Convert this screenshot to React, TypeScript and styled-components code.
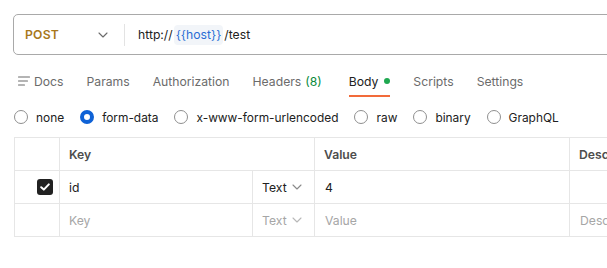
import React from "react";
import styled, { createGlobalStyle } from "styled-components";

const GlobalStyle = createGlobalStyle`
  html, body {
    margin: 0;
    background: #ffffff;
    overflow: hidden;
  }
  body {
    font-family: Inter, "Noto Sans", sans-serif;
    font-size: 12.2px;
    color: #212121;
  }
`;

const tabs = [
  { label: "Params" },
  { label: "Authorization" },
  { label: "Headers", count: "(8)" },
  { label: "Body", active: true, dot: true },
  { label: "Scripts" },
  { label: "Settings" },
];

const bodyTypes = ["none", "form-data", "x-www-form-urlencoded", "raw", "binary", "GraphQL"];

const Chevron = () => (
  <svg width="10" height="6" viewBox="0 0 10 6" fill="none">
    <path d="M1 1l4 4 4-4" stroke="#6b6b6b" strokeWidth="1.1" strokeLinecap="round" strokeLinejoin="round" />
  </svg>
);

const DocsIcon = () => (
  <svg width="12" height="10" viewBox="0 0 12 10" fill="none">
    <path d="M0.5 1h11M0.5 5h9M0.5 9h6" stroke="#6b6b6b" strokeWidth="1.1" strokeLinecap="round" />
  </svg>
);

const CheckMark = () => (
  <svg width="10" height="8" viewBox="0 0 10 8" fill="none">
    <path d="M1.2 4.2l2.6 2.4L8.8 1.4" stroke="#ffffff" strokeWidth="2" strokeLinecap="round" strokeLinejoin="round" />
  </svg>
);

export default function App() {
  return (
    <>
      <GlobalStyle />
      <Page>
        <UrlBar>
          <MethodSelect>
            <Method>POST</Method>
            <Chevron />
          </MethodSelect>
          <Divider />
          <UrlText>
            http://
            <VarChip>{"{{host}}"}</VarChip>
            /test
          </UrlText>
        </UrlBar>

        <TabRow>
          <Tab>
            <DocsIcon />
            Docs
          </Tab>
          {tabs.map((t) => (
            <Tab key={t.label} $active={t.active}>
              {t.label}
              {t.count && <Count>{t.count}</Count>}
              {t.dot && <Dot />}
            </Tab>
          ))}
        </TabRow>

        <RadioRow>
          {bodyTypes.map((b) => (
            <RadioItem key={b}>
              <Radio $checked={b === "form-data"} />
              {b}
            </RadioItem>
          ))}
        </RadioRow>

        <Table>
          <Row>
            <CheckCell />
            <HeadCell $width={255}>Key</HeadCell>
            <HeadCell $width={255}>Value</HeadCell>
            <HeadCell $width={120}>Desc</HeadCell>
          </Row>
          <Row>
            <CheckCell>
              <CheckBox>
                <CheckMark />
              </CheckBox>
            </CheckCell>
            <KeyCell>
              <CellText>id</CellText>
              <TypeSelect>
                Text
                <Chevron />
              </TypeSelect>
            </KeyCell>
            <Cell $width={255}>4</Cell>
            <Cell $width={120} />
          </Row>
          <Row>
            <CheckCell />
            <KeyCell>
              <CellText $placeholder>Key</CellText>
              <TypeSelect $placeholder>
                Text
                <Chevron />
              </TypeSelect>
            </KeyCell>
            <Cell $width={255} $placeholder>Value</Cell>
            <Cell $width={120} $placeholder>Desc</Cell>
          </Row>
        </Table>
      </Page>
    </>
  );
}

const Page = styled.div`
  width: 720px;
  padding: 14px 0 0 13px;
`;

const UrlBar = styled.div`
  display: flex;
  align-items: center;
  height: 41px;
  box-sizing: border-box;
  border: 1px solid #a9a9a9;
  border-radius: 5px;
`;

const MethodSelect = styled.div`
  display: flex;
  align-items: center;
  justify-content: space-between;
  width: 110px;
  box-sizing: border-box;
  padding: 0 16px 0 11px;
`;

const Method = styled.span`
  color: #a8781c;
  font-weight: 600;
  letter-spacing: 0.2px;
`;

const Divider = styled.div`
  width: 1px;
  height: 22px;
  background: #e3e3e3;
`;

const UrlText = styled.div`
  display: flex;
  align-items: center;
  gap: 1px;
  padding-left: 13px;
  color: #212121;
`;

const VarChip = styled.span`
  display: inline-flex;
  align-items: center;
  height: 20px;
  padding: 0 2px;
  border-radius: 4px;
  background: #f2f5f9;
  color: #2a6ed5;
`;

const TabRow = styled.div`
  display: flex;
  gap: 23px;
  margin-top: 11px;
  padding-left: 5px;
`;

const Tab = styled.div<{ $active?: boolean }>`
  display: flex;
  align-items: center;
  gap: 5px;
  height: 31px;
  box-sizing: border-box;
  padding-top: 1px;
  border-bottom: 2px solid ${(p) => (p.$active ? "#f26b3a" : "transparent")};
  color: ${(p) => (p.$active ? "#212121" : "#6b6b6b")};
  svg {
    margin-right: -1px;
  }
`;

const Count = styled.span`
  color: #0a8a3c;
  margin: 0 4px 0 -1px;
`;

const Dot = styled.span`
  width: 6px;
  height: 6px;
  border-radius: 50%;
  background: #1fa850;
  margin-left: 1px;
`;

const RadioRow = styled.div`
  display: flex;
  align-items: center;
  gap: 16px;
  height: 22px;
  margin-top: 9px;
  padding-left: 1px;
  font-size: 11.9px;
`;

const RadioItem = styled.label`
  display: flex;
  align-items: center;
  gap: 8px;
  color: #212121;
`;

const Radio = styled.span<{ $checked?: boolean }>`
  width: 14px;
  height: 14px;
  box-sizing: border-box;
  border-radius: 50%;
  border: ${(p) => (p.$checked ? "4px solid #0f62d6" : "1px solid #8f8f8f")};
  background: #ffffff;
`;

const Table = styled.div`
  margin-top: 9px;
  margin-left: 1px;
  border-top: 1px solid #e6e6e6;
  border-left: 1px solid #e6e6e6;
`;

const Row = styled.div`
  display: flex;
  height: 33px;
  box-sizing: border-box;
  border-bottom: 1px solid #e6e6e6;
`;

const CheckCell = styled.div`
  display: flex;
  align-items: center;
  justify-content: flex-end;
  width: 45px;
  padding-right: 6px;
  box-sizing: border-box;
  border-right: 1px solid #e6e6e6;
`;

const HeadCell = styled.div<{ $width: number }>`
  display: flex;
  align-items: center;
  width: ${(p) => p.$width}px;
  box-sizing: border-box;
  padding-left: 9px;
  border-right: 1px solid #e6e6e6;
  color: #4d4d4d;
  font-weight: 600;
`;

const Cell = styled.div<{ $width: number; $placeholder?: boolean }>`
  display: flex;
  align-items: center;
  width: ${(p) => p.$width}px;
  box-sizing: border-box;
  padding-left: 10px;
  border-right: 1px solid #e6e6e6;
  color: ${(p) => (p.$placeholder ? "#a6a6a6" : "#212121")};
`;

const KeyCell = styled.div`
  display: flex;
  width: 255px;
  box-sizing: border-box;
  border-right: 1px solid #e6e6e6;
`;

const CellText = styled.div<{ $placeholder?: boolean }>`
  display: flex;
  align-items: center;
  flex: 1;
  padding-left: 9px;
  border-right: 1px solid #e6e6e6;
  color: ${(p) => (p.$placeholder ? "#a6a6a6" : "#212121")};
`;

const TypeSelect = styled.div<{ $placeholder?: boolean }>`
  display: flex;
  align-items: center;
  gap: 5px;
  width: 61px;
  box-sizing: border-box;
  padding-left: 9px;
  color: ${(p) => (p.$placeholder ? "#a6a6a6" : "#212121")};
  svg path {
    stroke: ${(p) => (p.$placeholder ? "#b8b8b8" : "#8a8a8a")};
  }
`;

const CheckBox = styled.span`
  display: flex;
  align-items: center;
  justify-content: center;
  width: 16px;
  height: 16px;
  border-radius: 3px;
  background: #212121;
`;
